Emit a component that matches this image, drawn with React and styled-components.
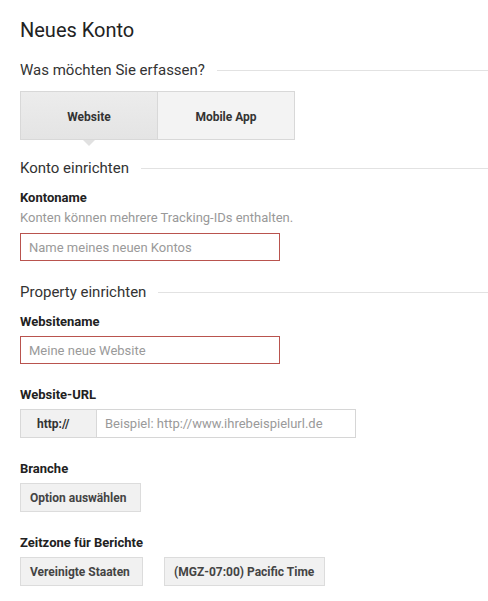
import React, { useState } from "react";
import styled, { createGlobalStyle } from "styled-components";

const GlobalStyle = createGlobalStyle`
  body {
    margin: 0;
    background: #fff;
    font-family: Roboto, "Liberation Sans", Arial, sans-serif;
    color: #222;
  }
`;

const Page = styled.div`
  padding: 18px 0 0 20px;
`;

const Title = styled.h1`
  margin: 0 0 17px 0;
  font-size: 20px;
  line-height: 25px;
  font-weight: 400;
  color: #222;
`;

const SectionHeading = styled.div`
  display: flex;
  align-items: center;
  font-size: 15px;
  line-height: 20px;
  color: #333;
  margin: ${(p) => p.$top || 0}px 0 ${(p) => p.$bottom || 11}px 0;

  &::after {
    content: "";
    flex: 1;
    height: 1px;
    background: #e2e2e2;
    margin-left: 12px;
  }
`;

const Tabs = styled.div`
  display: flex;
  width: 275px;
  height: 49px;
`;

const Tab = styled.button`
  position: relative;
  flex: 1;
  border: 1px solid #d8d8d8;
  border-left-width: ${(p) => (p.$first ? 1 : 0)}px;
  background: ${(p) => (p.$active ? "linear-gradient(#ececec, #e4e4e4)" : "#f3f3f3")};
  font-family: inherit;
  font-size: 12px;
  font-weight: 700;
  color: #333;
  cursor: pointer;
  padding: 2px 0 0 0;

  &::after {
    display: ${(p) => (p.$active ? "block" : "none")};
    content: "";
    position: absolute;
    left: 50%;
    bottom: -7px;
    margin-left: -6px;
    border-left: 6px solid transparent;
    border-right: 6px solid transparent;
    border-top: 6px solid #e1e1e1;
  }
`;

const Field = styled.div`
  margin-bottom: ${(p) => (p.$last ? 0 : 22)}px;
`;

const Label = styled.div`
  font-size: 13px;
  line-height: 18px;
  font-weight: 700;
  color: #222;
  margin-bottom: ${(p) => (p.$tight ? 2 : 5)}px;
`;

const Help = styled.div`
  font-size: 13px;
  line-height: 18px;
  color: #999;
  margin-bottom: 6px;
`;

const TextInput = styled.input`
  box-sizing: border-box;
  display: block;
  width: ${(p) => p.$width || 260}px;
  height: ${(p) => (p.$joined ? 29 : 28)}px;
  padding: 0 8px;
  border: 1px solid ${(p) => (p.$error ? "#b9534e" : "#d6d6d6")};
  border-left-width: ${(p) => (p.$joined ? 0 : 1)}px;
  font-family: inherit;
  font-size: 13px;
  color: #333;
  outline: none;
  background: #fff;

  &::placeholder {
    color: #9a9a9a;
  }
`;

const UrlGroup = styled.div`
  display: flex;
`;

const Prefix = styled.div`
  box-sizing: border-box;
  width: 77px;
  height: 29px;
  display: flex;
  align-items: center;
  padding-left: 16px;
  border: 1px solid #d8d8d8;
  background: #f1f1f1;
  font-size: 12px;
  font-weight: 700;
  color: #333;
`;

const Row = styled.div`
  display: flex;
  gap: 21px;
`;

const Select = styled.button`
  box-sizing: border-box;
  width: ${(p) => p.$width}px;
  height: 29px;
  padding: 0 0 0 9px;
  text-align: left;
  border: 1px solid #dcdcdc;
  background: #f1f1f1;
  font-family: inherit;
  font-size: 12px;
  font-weight: 700;
  color: #444;
  cursor: pointer;
`;

const App = () => {
  const [kind, setKind] = useState("web");

  return (
    <Page>
      <GlobalStyle />
      <Title>Neues Konto</Title>

      <SectionHeading $bottom={11}>Was möchten Sie erfassen?</SectionHeading>
      <Tabs>
        <Tab $first $active={kind === "web"} onClick={() => setKind("web")}>
          Website
        </Tab>
        <Tab $active={kind === "app"} onClick={() => setKind("app")}>
          Mobile App
        </Tab>
      </Tabs>

      <SectionHeading $top={18}>Konto einrichten</SectionHeading>
      <Field>
        <Label $tight>Kontoname</Label>
        <Help>Konten können mehrere Tracking-IDs enthalten.</Help>
        <TextInput $error placeholder="Name meines neuen Kontos" />
      </Field>

      <SectionHeading $top={-1}>Property einrichten</SectionHeading>
      <Field>
        <Label>Websitename</Label>
        <TextInput $error placeholder="Meine neue Website" />
      </Field>

      <Field>
        <Label>Website-URL</Label>
        <UrlGroup>
          <Prefix>http://</Prefix>
          <TextInput $joined $width={259} placeholder="Beispiel: http://www.ihrebeispielurl.de" />
        </UrlGroup>
      </Field>

      <Field>
        <Label>Branche</Label>
        <Select $width={121}>Option auswählen</Select>
      </Field>

      <Field $last>
        <Label>Zeitzone für Berichte</Label>
        <Row>
          <Select $width={123}>Vereinigte Staaten</Select>
          <Select $width={161}>(MGZ-07:00) Pacific Time</Select>
        </Row>
      </Field>
    </Page>
  );
};

export default App;
